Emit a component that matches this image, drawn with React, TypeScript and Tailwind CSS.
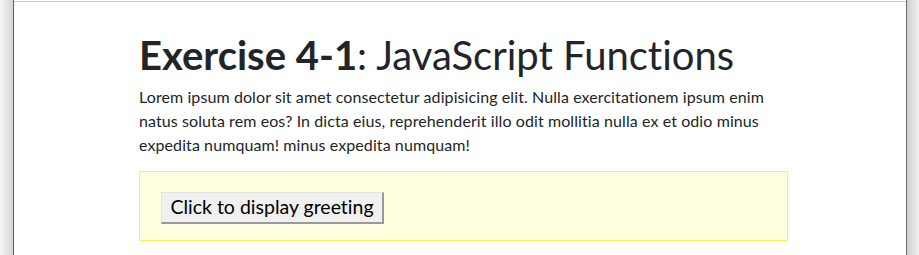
export default function App() {
  return (
    <div
      className="flex h-[255px] w-[919px] overflow-hidden bg-white text-[#212529]"
      style={{ fontFamily: 'Lato, "Noto Sans", sans-serif', fontVariantLigatures: 'none' }}
    >
      <div className="w-[13px] shrink-0 bg-gradient-to-r from-[#f8f8f8] to-[#d6d6d6]" />
      <div className="w-px shrink-0 bg-[#5f5f5f]" />
      <main className="flex-1 bg-white pt-px">
        <div className="h-full border-t border-[#cdcdcd] pl-[125px] pt-[29px]">
          <div className="w-[649px]">
            <h1 className="whitespace-nowrap text-[40px] leading-[48px] font-normal">
              <strong className="font-bold">Exercise 4-1</strong>: JavaScript Functions
            </h1>
            <p className="mt-[6px] whitespace-nowrap text-[16px] leading-[24px] tracking-[0.09px]">
              Lorem ipsum dolor sit amet consectetur adipisicing elit. Nulla exercitationem ipsum enim
              <br />
              natus soluta rem eos? In dicta eius, reprehenderit illo odit mollitia nulla ex et odio minus
              <br />
              expedita numquam! minus expedita numquam!
            </p>
            <div className="mt-[14px] h-[70px] border border-[#f7f54a] bg-[#ffffe0] pl-[21px] pt-[20px]">
              <button
                type="button"
                className="flex h-[32px] w-[223px] items-center justify-center border-t border-l border-r-2 border-b-2 border-t-[#e3e3e3] border-l-[#e3e3e3] border-r-[#9a9a9a] border-b-[#9a9a9a] bg-[#f0f0f0] pb-[2px] text-[19.5px] leading-none text-black"
              >
                Click to display greeting
              </button>
            </div>
          </div>
        </div>
      </main>
      <div className="w-px shrink-0 bg-[#6a6a6a]" />
      <div className="w-[12px] shrink-0 bg-gradient-to-r from-[#cfcfcf] to-[#f2f2f2]" />
    </div>
  );
}
